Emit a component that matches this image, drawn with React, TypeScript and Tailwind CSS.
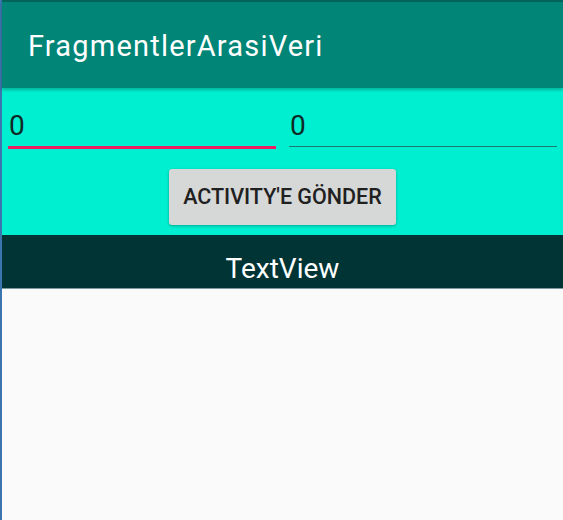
import React from "react";

function Field({ value, focused }: { value: string; focused?: boolean }) {
  return (
    <div className="flex-1 flex flex-col">
      <div className="h-[50px] flex items-end pl-[1px] text-[28px] leading-none text-[#0f2a26] pb-[6px]">{value}</div>
      {focused ? (
        <div className="h-[3px] bg-[#e91e63]" />
      ) : (
        <div className="h-[3px] flex flex-col">
          <div className="h-[1px] bg-[#1e7a6e]" />
        </div>
      )}
    </div>
  );
}

export default function App() {
  return (
    <div className="w-[563px] h-[520px] flex bg-[#fafafa] overflow-hidden" style={{ fontFamily: "Roboto, 'Noto Sans', sans-serif" }}>
      <div className="w-[2px] bg-[#3a75ae] shrink-0" />
      <div className="flex-1 flex flex-col">
        <div className="h-[2px] bg-[#02645a]" />
        <div className="h-[86px] bg-[#008577] flex items-center pl-[26px] relative z-10 shadow-[0_2px_3px_rgba(0,0,0,0.25)]">
          <span className="text-white text-[29px] tracking-[1.2px] mt-[3px]">FragmentlerArasiVeri</span>
        </div>
        <div className="h-[147px] bg-[#00efd0] flex flex-col">
          <div className="flex gap-[13px] px-[6px] mt-[8px]">
            <Field value="0" focused />
            <Field value="0" />
          </div>
          <div className="flex justify-center mt-[20px]">
            <button className="w-[227px] h-[56px] rounded-[3px] bg-[#d6d7d7] shadow-[0_1px_3px_rgba(0,0,0,0.3)] text-[21.5px] font-medium text-[#202020]">
              ACTIVITY'E GÖNDER
            </button>
          </div>
        </div>
        <div className="h-[53px] bg-[#003435] flex items-end justify-center pb-[3px]">
          <span className="text-white text-[28px] leading-none mb-[2px]">TextView</span>
        </div>
        <div className="h-[1px] bg-[#7a9ca0]" />
        <div className="flex-1 bg-[#fafafa]" />
      </div>
    </div>
  );
}
